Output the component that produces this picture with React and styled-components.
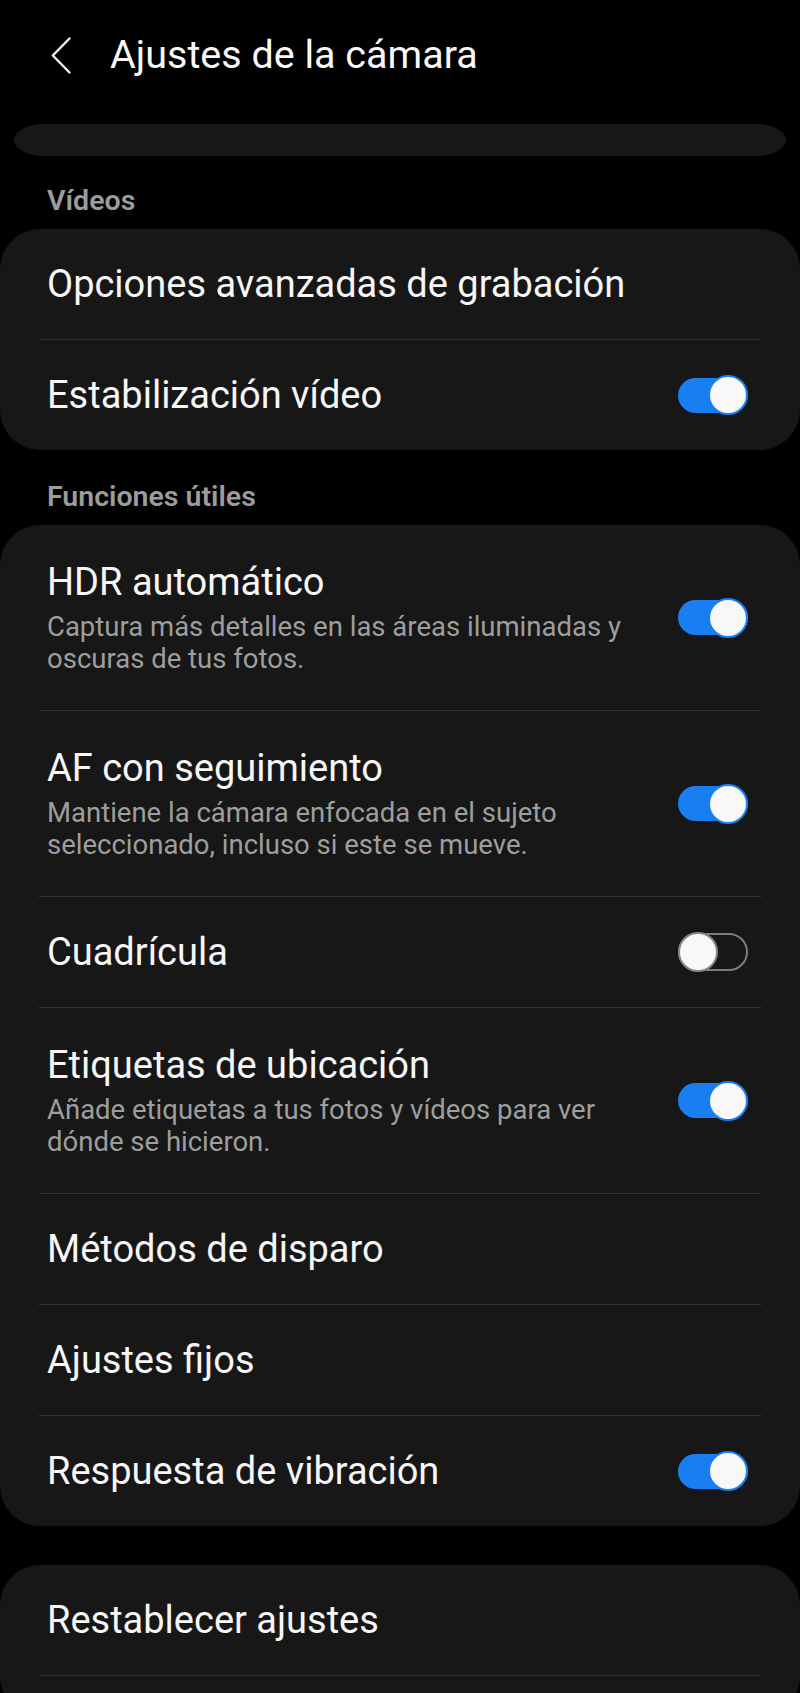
import React from "react";
import styled, { createGlobalStyle } from "styled-components";

const GlobalStyle = createGlobalStyle`
  html, body { margin: 0; padding: 0; background: #000; }
  body { font-family: Roboto, "Noto Sans", sans-serif; -webkit-font-smoothing: antialiased; }
  * { box-sizing: border-box; }
`;

const Page = styled.div`
  width: 800px;
  height: 1693px;
  overflow: hidden;
  background: #000;
  display: flex;
  flex-direction: column;
`;

const Header = styled.header`
  height: 110px;
  display: flex;
  align-items: center;
  gap: 39px;
  padding-left: 51px;
  flex-shrink: 0;
`;

const BackButton = styled.button`
  display: flex;
  align-items: center;
  justify-content: center;
  width: 20px;
  height: 37px;
  padding: 0;
  border: none;
  background: transparent;
  color: #f4f4f4;
`;

const Title = styled.h1`
  margin: 0;
  font-size: 39.5px;
  line-height: 48px;
  font-weight: 400;
  color: #f8f8f8;
`;

const ScrolledCard = styled.div`
  height: 32px;
  margin: 14px 14px 0;
  background: #171717;
  border-radius: 30px / 16px;
  flex-shrink: 0;
`;

const SectionLabel = styled.div`
  margin: ${(p) => p.$top}px 0 10px 47px;
  font-size: 28.5px;
  line-height: 36px;
  font-weight: 600;
  color: #9c9c9c;
`;

const Card = styled.section`
  background: #171717;
  border-radius: 40px;
  margin-top: ${(p) => p.$top || 0}px;
  flex-shrink: 0;
`;

const Row = styled.div`
  display: flex;
  align-items: center;
  gap: 18px;
  min-height: 110px;
  padding: ${(p) => (p.$tall ? "35px" : "33px")} 52px ${(p) => (p.$tall ? "35px" : "33px")} 47px;
`;

const TextBlock = styled.div`
  flex: 1;
  min-width: 0;
  display: flex;
  flex-direction: column;
`;

const RowTitle = styled.div`
  font-size: 38px;
  line-height: 44px;
  color: #f6f6f6;
`;

const RowSub = styled.div`
  margin-top: 7px;
  font-size: 27.5px;
  line-height: 32px;
  color: #9e9e9e;
`;

const Divider = styled.div`
  height: 1px;
  margin: 0 39px;
  background: #343434;
`;

const CardTail = styled.div`
  height: 40px;
`;

const SwitchWrap = styled.span`
  position: relative;
  width: 70px;
  height: 42px;
  flex-shrink: 0;
  display: flex;
  align-items: center;
`;

const Track = styled.span`
  width: 70px;
  height: ${(p) => (p.$on ? 35 : 38)}px;
  border-radius: 19px;
  background: ${(p) => (p.$on ? "#1a7ef3" : "transparent")};
  border: ${(p) => (p.$on ? "none" : "2px solid #7c7c7c")};
`;

const Thumb = styled.span`
  position: absolute;
  top: 1px;
  left: ${(p) => (p.$on ? "30px" : "0")};
  width: 40px;
  height: 40px;
  border-radius: 50%;
  background: #f8f8f8;
  border: 2px solid ${(p) => (p.$on ? "#1a7ef3" : "#858585")};
`;

function Switch({ on }) {
  return (
    <SwitchWrap>
      <Track $on={on} />
      <Thumb $on={on} />
    </SwitchWrap>
  );
}

function SettingRow({ title, sub, toggle }) {
  return (
    <Row $tall={!!sub}>
      <TextBlock>
        <RowTitle>{title}</RowTitle>
        {sub && <RowSub>{sub}</RowSub>}
      </TextBlock>
      {toggle !== undefined && <Switch on={toggle} />}
    </Row>
  );
}

function SettingsCard({ items, top, tail }) {
  return (
    <Card $top={top}>
      {items.map((it, i) => (
        <React.Fragment key={it.title}>
          {i > 0 && <Divider />}
          <SettingRow {...it} />
        </React.Fragment>
      ))}
      {tail && (
        <>
          <Divider />
          <CardTail />
        </>
      )}
    </Card>
  );
}

const videos = [
  { title: "Opciones avanzadas de grabación" },
  { title: "Estabilización vídeo", toggle: true },
];

const utils = [
  {
    title: "HDR automático",
    sub: "Captura más detalles en las áreas iluminadas y oscuras de tus fotos.",
    toggle: true,
  },
  {
    title: "AF con seguimiento",
    sub: "Mantiene la cámara enfocada en el sujeto seleccionado, incluso si este se mueve.",
    toggle: true,
  },
  { title: "Cuadrícula", toggle: false },
  {
    title: "Etiquetas de ubicación",
    sub: "Añade etiquetas a tus fotos y vídeos para ver dónde se hicieron.",
    toggle: true,
  },
  { title: "Métodos de disparo" },
  { title: "Ajustes fijos" },
  { title: "Respuesta de vibración", toggle: true },
];

const more = [{ title: "Restablecer ajustes" }];

export default function App() {
  return (
    <>
      <GlobalStyle />
      <Page>
        <Header>
          <BackButton aria-label="Atrás">
            <svg width="20" height="37" viewBox="0 0 20 37" fill="none">
              <polyline
                points="18.5,1.5 1.8,18.5 18.5,35.5"
                stroke="currentColor"
                strokeWidth="2.4"
                strokeLinecap="round"
                strokeLinejoin="round"
              />
            </svg>
          </BackButton>
          <Title>Ajustes de la cámara</Title>
        </Header>
        <ScrolledCard />
        <SectionLabel $top={27}>Vídeos</SectionLabel>
        <SettingsCard items={videos} />
        <SectionLabel $top={29}>Funciones útiles</SectionLabel>
        <SettingsCard items={utils} />
        <SettingsCard items={more} top={39} tail />
      </Page>
    </>
  );
}
